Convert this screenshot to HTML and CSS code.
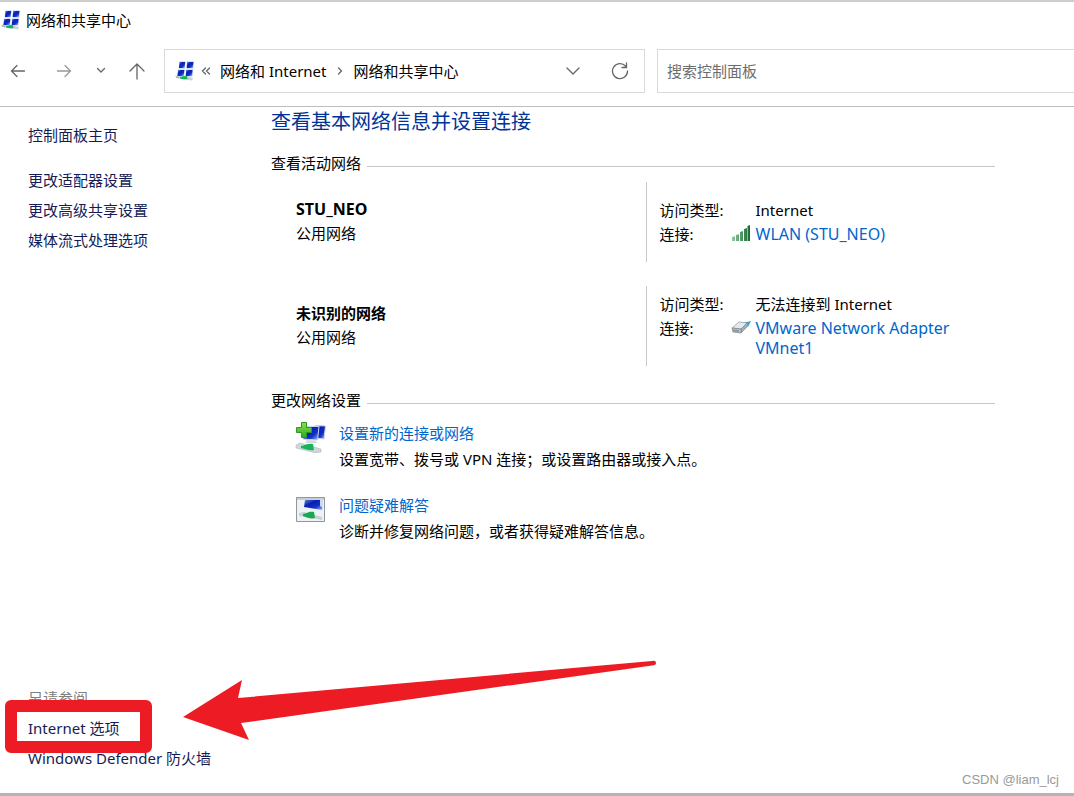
FILE: index.html
```html
<!DOCTYPE html>
<html lang="zh-CN">
<head>
<meta charset="utf-8">
<title>网络和共享中心</title>
<link rel="stylesheet" href="styles.css">
</head>
<body>
<svg class="defs" width="0" height="0" aria-hidden="true">
  <defs>
    <linearGradient id="screen" x1="0" y1="0" x2="1" y2="1">
      <stop offset="0" stop-color="#5f86e8"/><stop offset=".35" stop-color="#0a1fb0"/><stop offset=".65" stop-color="#1230c8"/><stop offset="1" stop-color="#a9c3f8"/>
    </linearGradient>
    <linearGradient id="plus" x1="0" y1="0" x2="0" y2="1">
      <stop offset="0" stop-color="#8be04e"/><stop offset="1" stop-color="#2aa822"/>
    </linearGradient>
    <linearGradient id="bar" x1="0" y1="0" x2="1" y2="0">
      <stop offset="0" stop-color="#8fcaa0"/><stop offset="1" stop-color="#17692f"/>
    </linearGradient>
    <symbol id="network" viewBox="0 0 20 20">
      <path d="M3 15.500 7 14l11 3-1 2.500-8-1L3 17z" fill="#c9d2d8"/>
      <path d="M4.500 .5h6l-.8 7H3.500zM12 .5h7l-.8 7h-6.700zM3 8.500h6.700l-.7 7H2zM11 8.500h7.200l-.9 7h-6.800z" fill="#b4c8f2"/>
      <g fill="url(#screen)">
        <path d="M4.600 1h5.600l-.6 6H4z"/><path d="M12.200 1h6.200l-.6 6H11.700z"/>
        <path d="M3.200 9h6.100l-.6 6H2.500z"/><path d="M11.200 9h6.300l-.6 6h-6.100z"/>
      </g>
      <path d="M5 16c2 .2 3.500-1.700 7-.8l.6 2.600c-3 .8-5 .7-7.600-.3z" fill="#12b652"/>
      <path d="M.5 14.500 4 16v1.500l-3-.8z" fill="#aab5ba"/>
    </symbol>
  </defs>
</svg>
<div class="window">
  <header class="titlebar">
    <svg class="icon-network"><use href="#network"/></svg>
    <h1 class="titlebar-text">网络和共享中心</h1>
  </header>
  <div class="toolbar">
    <nav class="history" aria-label="导航">
      <button class="nav-button" aria-label="后退"><svg width="16" height="16" viewBox="0 0 16 16"><path d="M14.500 8H1.500M7 2.500 1.500 8 7 13.500"/></svg></button>
      <button class="nav-button nav-muted" aria-label="前进"><svg width="16" height="16" viewBox="0 0 16 16"><path d="M1.500 8h13M9 2.500 14.500 8 9 13.500"/></svg></button>
      <button class="nav-button nav-small" aria-label="最近的位置"><svg width="10" height="8" viewBox="0 0 10 8"><path d="m1.500 1.500 3.500 3.500L8.500 1.500"/></svg></button>
      <button class="nav-button" aria-label="上移"><svg width="16" height="18" viewBox="0 0 16 18"><path d="M8 17V2M1 9l7-7 7 7"/></svg></button>
    </nav>
    <div class="address">
      <svg class="icon-network"><use href="#network"/></svg>
      <svg class="chevrons" width="10" height="8" viewBox="0 0 10 8"><path d="M4.500 1 1.500 4l3 3M8.500 1l-3 3 3 3"/></svg>
      <button class="crumb">网络和 Internet</button>
      <svg class="crumb-arrow" width="6" height="8" viewBox="0 0 6 8"><path d="m1.500 1 3 3-3 3"/></svg>
      <button class="crumb">网络和共享中心</button>
      <button class="address-button address-history" aria-label="以前的位置"><svg width="14" height="10" viewBox="0 0 14 10"><path d="m1 2 6 6 6-6"/></svg></button>
      <button class="address-button" aria-label="刷新"><svg width="18" height="18" viewBox="0 0 18 18"><path d="M16.500 9A7.500 7.500 0 1 1 14.500 4M15.500 1v4.500H11"/></svg></button>
    </div>
    <input class="search" type="text" placeholder="搜索控制面板" aria-label="搜索控制面板">
  </div>
  <div class="content">
    <aside class="sidebar">
      <nav class="side-links">
        <a class="side-link side-home" href="#">控制面板主页</a>
        <a class="side-link" href="#">更改适配器设置</a>
        <a class="side-link" href="#">更改高级共享设置</a>
        <a class="side-link" href="#">媒体流式处理选项</a>
      </nav>
      <nav class="side-links">
        <span class="see-also">另请参阅</span>
        <span class="marked"><a class="side-link" href="#">Internet 选项</a><span class="marker"></span>
          <svg class="marker-arrow" width="476" height="84" viewBox="0 0 476 84"><path d="M2 58 61 21 57 39 471 2Q475 1 475 4Q475 6 471 6.500L60 64l8 17z"/></svg>
        </span>
        <a class="side-link" href="#">Windows Defender 防火墙</a>
      </nav>
    </aside>
    <main class="main">
      <h2 class="page-title">查看基本网络信息并设置连接</h2>
      <h3 class="section-title">查看活动网络</h3>
      <div class="networks">
        <section class="network">
          <div class="network-name"><strong class="latin">STU_NEO</strong><span>公用网络</span></div>
          <dl class="details">
            <dt>访问类型:</dt><dd>Internet</dd>
            <dt>连接:</dt>
            <dd class="connection">
              <svg class="connection-icon" width="20" height="18" viewBox="0 0 20 18"><g fill="url(#bar)"><path d="M1 13l3-.8V17H1zM5 11l3-.8V17H5zM9 8l3-1v10H9zM13 5l3-1v13h-3zM16.500 2l2.500-1v16h-2.500z"/></g></svg>
              <a class="link latin" href="#">WLAN (STU_NEO)</a>
            </dd>
          </dl>
        </section>
        <section class="network">
          <div class="network-name"><strong>未识别的网络</strong><span>公用网络</span></div>
          <dl class="details">
            <dt>访问类型:</dt><dd>无法连接到 Internet</dd>
            <dt>连接:</dt>
            <dd class="connection">
              <svg class="connection-icon" width="20" height="18" viewBox="0 0 20 18"><path d="M13 4.500 20 3l-3 6z" fill="#3ea4d8"/><path d="M1 10 8 4l8 1-6 6z" fill="#e3e9ec" stroke="#8797a3" stroke-width=".7"/><path d="m10 11 6-6 1 3-7 7z" fill="#9fb0bd" stroke="#7d8d99" stroke-width=".7"/><path d="m1 10 9 1v4l-8-1z" fill="#c0c8cc" stroke="#73808a" stroke-width=".7"/><path d="M3 11.500v2m2-1.800v2m2-1.800v2" stroke="#5e6b5c"/></svg>
              <a class="link latin" href="#">VMware Network Adapter VMnet1</a>
            </dd>
          </dl>
        </section>
      </div>
      <h3 class="section-title">更改网络设置</h3>
      <ul class="tasks">
        <li class="task">
          <svg class="task-icon" width="32" height="32" viewBox="0 0 32 32">
            <path d="M20 4.500 30.500 5 29 18l-8-1z" fill="url(#screen)" stroke="#c5d3f0"/>
            <path d="M9 5.500h15L22.500 19 8 18z" fill="url(#screen)" stroke="#c5d3f0"/>
            <path d="m12 19 8 .6 3 2.400H10z" fill="#d5dce1"/>
            <path d="m1 24 4-2 21 6v3l-5 1L1 27z" fill="#cfd7da" stroke="#a5b0b4" stroke-width=".5"/>
            <path d="M6 25c4 0 6-3 12-2l1 6c-5 1-8-1-13-2z" fill="#18b45a"/>
            <path d="M6.500 1.500h5v5h5v5h-5v5h-5v-5h-5v-5h5z" fill="url(#plus)" stroke="#269a24"/>
          </svg>
          <div class="task-text"><a class="link" href="#">设置新的连接或网络</a><p>设置宽带、拨号或 VPN 连接；或设置路由器或接入点。</p></div>
        </li>
        <li class="task">
          <svg class="task-icon" width="32" height="32" viewBox="0 0 32 32">
            <path d="M1.500 4.500h28v24h-28z" fill="#eef2f5" stroke="#8e979f"/>
            <path d="M2 5h27v2H2z" fill="#c7ced4"/>
            <path d="M10 7h18l-1 10-18-3z" fill="url(#screen)"/><path d="M25 6h3v9l-3-2z" fill="#cfdaf2"/>
            <path d="m4 20 5-1 18 5v3l-5-1-18-3z" fill="#c8d0d4"/>
            <path d="M8 21c4 0 5-3 11-2l1 6c-4 1-7 0-12-2z" fill="#18a852"/>
          </svg>
          <div class="task-text"><a class="link" href="#">问题疑难解答</a><p>诊断并修复网络问题，或者获得疑难解答信息。</p></div>
        </li>
      </ul>
    </main>
    <span class="watermark">CSDN @liam_lcj</span>
  </div>
</div>
</body>
</html>
```
FILE: styles.css
```css
* { box-sizing: border-box; }
body {
  margin: 0;
  background: #fff;
  color: #000;
  font: 15px/24px "Noto Sans", "Noto Sans CJK SC", sans-serif;
}
h1, h2, h3, p, dl, dd, ul { margin: 0; padding: 0; font-weight: 400; }
button { padding: 0; border: 0; background: none; font: inherit; color: inherit; }
a { text-decoration: none; }
svg { flex: none; }
.defs { position: absolute; }
.window {
  display: flex;
  flex-direction: column;
  min-height: 100vh;
  overflow: hidden;
  border-top: 2px solid #cfcfcf;
  border-bottom: 3px solid #b4b4b4;
}
.titlebar { display: flex; align-items: center; gap: 5px; height: 36px; padding-left: 1px; }
.titlebar-text { font-size: 15px; }
.icon-network { width: 20px; height: 20px; }
.toolbar {
  display: grid;
  grid-template-columns: 164px 481fr 12px 417fr;
  align-items: center;
  height: 69px;
  padding-bottom: 3px;
  border-bottom: 1px solid #bdbdbd;
}
.toolbar svg path { stroke-linecap: round; }
.history { display: flex; align-items: center; padding-left: 10px; }
.nav-button, .address-button { display: flex; align-items: center; }
.nav-button svg, .address-button svg, .chevrons, .crumb-arrow { fill: none; stroke: #666; stroke-width: 1.3; }
.nav-button { width: 46px; }
.nav-muted svg { stroke: #999; }
.nav-muted { width: 40px; }
.nav-small { width: 33px; }
.nav-button:last-child { width: 16px; }
.address {
  display: flex;
  align-items: center;
  height: 44px;
  padding: 0 15px 0 10px;
  border: 1px solid #d9d9d9;
}
.chevrons { margin: 0 9px 0 6px; }
.crumb { white-space: nowrap; }
.crumb-arrow { margin: 0 10px 0 11px; }
.address-history { margin-left: auto; margin-right: 31px; }
.search {
  grid-column: 4;
  width: 100%;
  height: 44px;
  padding: 0 9px;
  border: 1px solid #d9d9d9;
  border-right: 0;
  font: inherit;
}
.search::placeholder { color: #6d6d6d; opacity: 1; }
.content { position: relative; display: flex; flex: 1; }
.sidebar {
  display: flex;
  flex-direction: column;
  justify-content: space-between;
  flex: none;
  width: 271px;
  padding: 13px 0 20px 28px;
  line-height: 30px;
}
.side-links { display: flex; flex-direction: column; align-items: flex-start; }
.side-link { color: #151c55; }
.side-home { margin-bottom: 15px; }
.see-also { color: #808080; }
.marked { position: relative; display: flex; }
.marked .side-link { white-space: nowrap; }
.marker {
  position: absolute;
  left: -23px;
  top: -13px;
  width: 147px;
  height: 53px;
  border: 12px solid #ed1c24;
  border-radius: 6px;
  pointer-events: none;
}
.marker-arrow { position: absolute; left: 153px; top: -54px; fill: #ed1c24; pointer-events: none; }
.main { flex: 1; min-width: 0; padding-right: 79px; }
.page-title { color: #003399; font-size: 20px; line-height: 30px; margin-bottom: 16px; }
.section-title { display: flex; align-items: center; gap: 6px; font-size: 15px; line-height: 20px; }
.section-title::after { content: ""; flex: 1; height: 1px; margin-top: 6px; background: #c8c8c8; }
.networks { display: grid; gap: 24px; margin: 9px 0 24px; padding-left: 25px; }
.network { display: grid; grid-template-columns: 1fr 1fr; min-height: 80px; }
.network-name { display: flex; flex-direction: column; justify-content: center; padding-bottom: 2px; }
.details {
  display: grid;
  grid-template-columns: 96px 1fr;
  align-content: center;
  padding-left: 13px;
  border-left: 1px solid #c8c8c8;
}
.connection { position: relative; padding: 2px 40px 2px 0; line-height: 20px; }
.connection-icon { position: absolute; right: 100%; top: 2px; margin-right: 5px; }
.link { color: #0066cc; }
.latin { font-size: 16px; }
.tasks { display: grid; gap: 22px; margin-top: 11px; padding-left: 24px; list-style: none; }
.task { display: flex; gap: 12px; }
.task-text p { margin-top: 2px; }
.watermark {
  position: absolute;
  right: 15px;
  bottom: 3px;
  color: #999;
  font: 13px/20px "Liberation Sans", sans-serif;
}
```
